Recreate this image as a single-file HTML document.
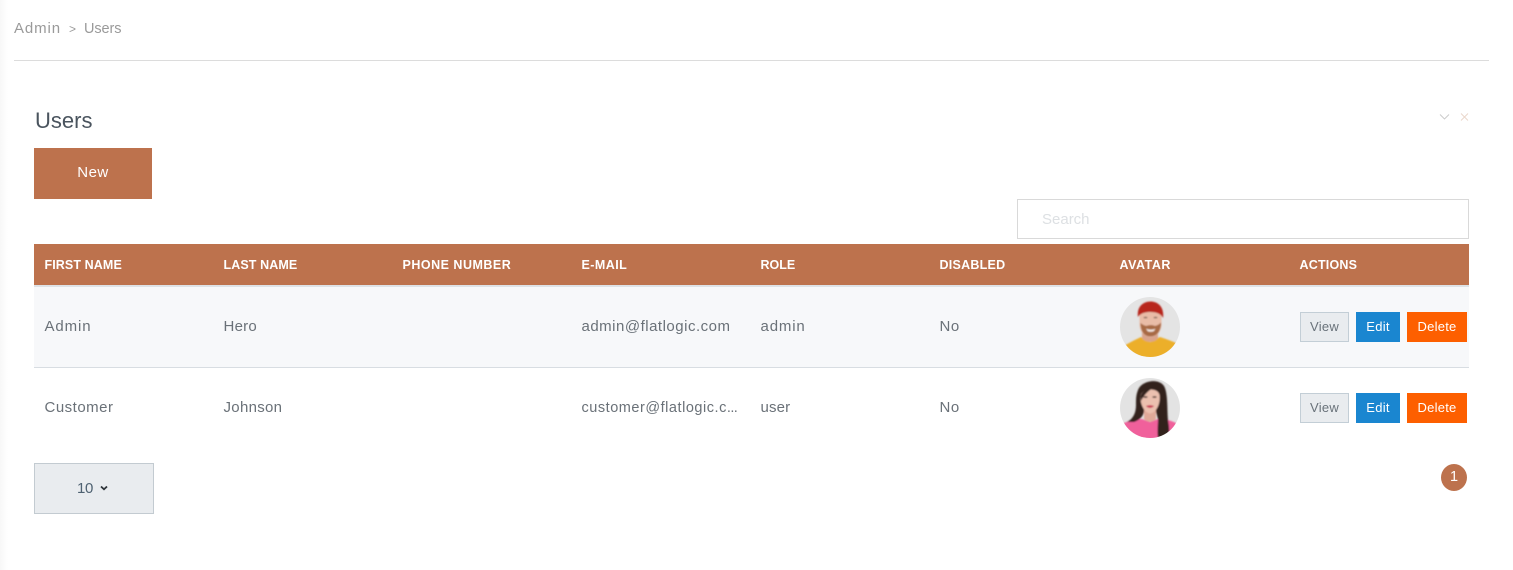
<!DOCTYPE html>
<html lang="en">
<head>
<meta charset="utf-8">
<title>Users</title>
<style>
*{box-sizing:border-box}
html,body{margin:0;padding:0;width:1513px;height:570px;overflow:hidden;background:#fff;font-family:"Liberation Sans",sans-serif;color:#495057}
body{position:relative}
.shade{position:absolute;left:0;top:0;width:8px;height:570px;background:linear-gradient(90deg,#f8f8f8,#fff)}
.abs{position:absolute}
.crumb{top:20px;font-size:15px;line-height:18px;color:#9a9a9a;white-space:nowrap}
.rule{left:14px;top:60px;width:1475px;height:1px;background:#dcdcdc}
h1{position:absolute;left:35px;top:107px;margin:0;font-weight:400;font-size:22px;line-height:27px;color:#4a545e;letter-spacing:0}
.new{left:34px;top:148px;width:118px;height:51px;background:#bd724d;color:#fff;font-size:15px;line-height:50px;text-align:center;letter-spacing:.5px}
.search{left:1017px;top:199px;width:452px;height:40px;border:1px solid #d9d9d9;padding-left:24px;font-size:15px;line-height:39px;color:#dde0e3}
table{position:absolute;left:34px;top:244px;width:1435px;border-collapse:separate;border-spacing:0;table-layout:fixed}
th{height:43px;background:#bd724d;color:#fff;font-size:12.5px;font-weight:700;text-align:left;padding:0 0 0 10.5px;letter-spacing:.2px;border-bottom:2px solid #dee2e6;white-space:nowrap;background-clip:padding-box}
td{height:80px;padding:0 0 1px 10.5px;font-size:15px;letter-spacing:.5px;color:#6a7178;white-space:nowrap;overflow:hidden}
tbody tr:first-child td{background:#f7f8fa;border-bottom:1px solid #d8dde2;height:81px}
.dots{letter-spacing:-.6px}
.btn{position:absolute;height:30px;font-size:13px;line-height:30px;text-align:center;letter-spacing:.25px;color:#fff}
.view{width:49px;left:1300px;background:#e9ecef;border:1px solid #c3ced6;color:#69727a;line-height:28px}
.edit{width:44px;left:1356px;background:#1a86d0}
.del{width:60px;left:1407px;background:#fd5f00}
.sel{left:34px;top:463px;width:120px;height:51px;background:#e9ecef;border:1px solid #c3cbd1;font-size:15px;line-height:49px;color:#4f6272}
.sel span{position:absolute;left:42px;letter-spacing:-.3px}
.sel svg{position:absolute;left:65px;top:21px}
.page{left:1441px;top:464px;width:26px;height:27px;border-radius:50%;background:#bd724d;color:#fff;font-size:14.5px;line-height:26px;text-align:center}
.av{position:absolute;left:1120px;width:60px;height:60px}
</style>
</head>
<body>
<div class="shade"></div>
<div class="abs crumb" style="left:14px;letter-spacing:.9px">Admin</div>
<div class="abs crumb" style="left:69px;font-size:12px">&gt;</div>
<div class="abs crumb" style="left:84px;font-size:14.5px;letter-spacing:-.1px">Users</div>
<div class="abs rule"></div>
<h1>Users</h1>
<svg class="abs" style="left:1438px;top:111px" width="36" height="12" viewBox="0 0 36 12" fill="none">
  <path d="M2 3.500L6.500 8L11 3.500" stroke="#c9c9c9" stroke-width=".9"/>
  <path d="M23 2.500L30 9.500M30 2.500L23 9.500" stroke="#ead6ca" stroke-width=".9"/>
</svg>
<div class="abs new">New</div>
<div class="abs search">Search</div>

<table>
<colgroup><col style="width:179px"><col style="width:179px"><col style="width:179px"><col style="width:179px"><col style="width:179px"><col style="width:180px"><col style="width:180px"><col style="width:180px"></colgroup>
<thead><tr><th style="letter-spacing:.1px">FIRST NAME</th><th style="letter-spacing:.1px">LAST NAME</th><th style="letter-spacing:.5px">PHONE NUMBER</th><th style="letter-spacing:.45px">E-MAIL</th><th style="letter-spacing:0">ROLE</th><th style="letter-spacing:.25px">DISABLED</th><th style="letter-spacing:.5px">AVATAR</th><th style="letter-spacing:.2px">ACTIONS</th></tr></thead>
<tbody>
<tr><td style="letter-spacing:.9px">Admin</td><td style="letter-spacing:.25px">Hero</td><td></td><td>admin@flatlogic.com</td><td style="letter-spacing:.85px">admin</td><td>No</td><td></td><td></td></tr>
<tr><td>Customer</td><td style="letter-spacing:.3px">Johnson</td><td></td><td style="font-size:14.5px;letter-spacing:.53px;padding-bottom:0">customer@flatlogic.c<span class="dots">...</span></td><td style="letter-spacing:.15px">user</td><td>No</td><td></td><td></td></tr>
</tbody>
</table>

<svg class="av" style="top:297px" viewBox="0 0 60 60">
  <defs>
    <clipPath id="c1"><circle cx="30" cy="30" r="30"/></clipPath>
    <filter id="b1" x="-10%" y="-10%" width="120%" height="120%"><feGaussianBlur stdDeviation=".8"/></filter>
  </defs>
  <g clip-path="url(#c1)">
    <rect width="60" height="60" fill="#e4e4e4"/>
    <g filter="url(#b1)">
      <path d="M3 50C8 46 15 43 21 40L30 45L40 40C46 42 52 44 58 47L58 62H2Z" fill="#ecaf2c"/>
      <path d="M22 34H38V41C35 46 25 46 22 41Z" fill="#d9a48c"/>
      <path d="M19.500 15H41.500V27C41.500 35 36 40 30.500 40C25 40 19.500 35 19.500 27Z" fill="#e9bca7"/>
      <path d="M20.500 26C23 28 25 28.500 26 29C29 27.800 33 27.800 35 29C37 28.500 39 27.500 41 25.500C41 34 37 39.500 30.500 39.500C24 39.500 20.500 34 20.500 26Z" fill="#a86a45"/>
      <path d="M26 31.500C29 33 33 33 35.500 31.500L34 34C32 35 29 35 27.500 34Z" fill="#f3e6df"/>
      <path d="M18 20C16.500 10 23 4.500 30.500 4.500C38 4.500 44.500 10 43 21C41 17 37 15 30.500 15C24 15 20 17 18 20Z" fill="#b8281e"/>
      <ellipse cx="25.500" cy="20.500" rx="2" ry=".8" fill="#85685a"/>
      <ellipse cx="35.500" cy="20.500" rx="2" ry=".8" fill="#85685a"/>
    </g>
  </g>
</svg>

<svg class="av" style="top:378px" viewBox="0 0 60 60">
  <defs><clipPath id="c2"><circle cx="30" cy="30" r="30"/></clipPath></defs>
  <g clip-path="url(#c2)">
    <rect width="60" height="60" fill="#e3e3e3"/>
    <g filter="url(#b1)">
      <path d="M2 46C8 43 15 41 22 41L30 44L38 41C44 41 50 42 56 45L56 62H6Z" fill="#f0619b"/>
      <path d="M18 12C22 2 39 0 44 8C48 15 47 30 48 42C49 48 50 54 48 59L38 60C37 52 38 48 38 41L36 34H24C23 38 20 42 14 44L7 44C13 41 16 35 16 27C16 21 16 17 18 12Z" fill="#33231f"/>
      <path d="M24 32H36V41C33 44.500 27 44.500 24 41Z" fill="#e0a999"/>
      <path d="M20.500 18C22 10 38 9 39.500 17C40.500 25 37 34.500 30 35.500C24 34.500 20 26 20.500 18Z" fill="#ebc0af"/>
      <path d="M20.500 18C23 12 28 10 34 9C30 12 25 15 21 23Z" fill="#33231f"/>
      <path d="M26 28C28.500 27 31.500 27 34 28C32 30.500 28 30.500 26 28Z" fill="#c83a55"/>
      <ellipse cx="25.500" cy="19" rx="2.200" ry=".9" fill="#5d443c"/>
      <ellipse cx="34.500" cy="19" rx="2.200" ry=".9" fill="#5d443c"/>
    </g>
  </g>
</svg>

<div class="btn view" style="top:312px">View</div>
<div class="btn edit" style="top:312px">Edit</div>
<div class="btn del" style="top:312px">Delete</div>
<div class="btn view" style="top:393px">View</div>
<div class="btn edit" style="top:393px">Edit</div>
<div class="btn del" style="top:393px">Delete</div>

<div class="abs sel"><span>10</span><svg width="8" height="6" viewBox="0 0 8 6"><path d="M1 1.500L4 4.300L7 1.500" fill="none" stroke="#2e343a" stroke-width="1.800"/></svg></div>
<div class="abs page">1</div>
</body>
</html>
